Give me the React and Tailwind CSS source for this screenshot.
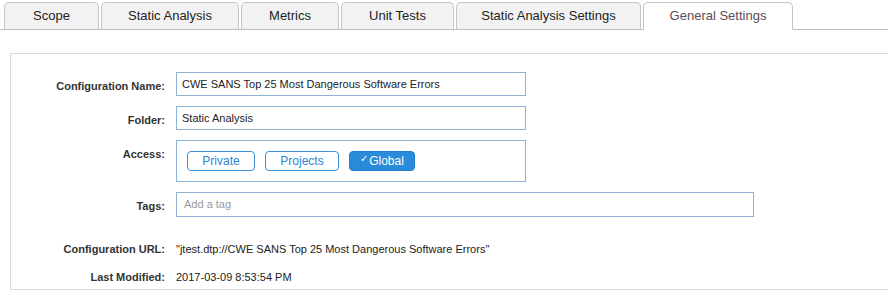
const TABS = ['Scope', 'Static Analysis', 'Metrics', 'Unit Tests', 'Static Analysis Settings', 'General Settings']
const TAB_WIDTHS = ['w-[95px]', 'w-[138px]', 'w-[98px]', 'w-[113px]', 'w-[185px]', 'w-[150px]']

function Row({ label, children, labelPad = 'pt-[6px]' }) {
  return (
    <div className="flex items-start">
      <div className={`w-[154px] shrink-0 text-right font-bold text-[11px] text-[#333] ${labelPad}`}>{label}</div>
      <div className="ml-[11px]">{children}</div>
    </div>
  )
}

function AccessButton({ children, active, w }) {
  return (
    <button
      className={
        `${w} h-[20px] rounded-[4px] border text-[12px] leading-none flex items-center justify-center ` +
        (active
          ? 'border-[#1f7fd0] bg-[#2a8bdb] text-white'
          : 'border-[#3a8fd8] bg-white text-[#2a85d4]')
      }
    >
      {children}
    </button>
  )
}

export default function App() {
  return (
    <div className="w-[888px] h-[294px] bg-white overflow-hidden" style={{ fontFamily: '"Liberation Sans", Arial, sans-serif' }}>
      {/* TABS */}
      <div className="flex items-end pl-[4px] pt-[3px] gap-[2px] border-b border-[#bdbdbd] h-[30px]">
        {TABS.map((t, i) => {
          const active = i === TABS.length - 1
          return (
            <div
              key={t}
              className={
                `${TAB_WIDTHS[i]} h-[27px] rounded-t-[5px] border border-[#c6c6c6] flex items-center justify-center text-[13px] ` +
                (active
                  ? 'bg-white border-b-white -mb-[1px] h-[28px] text-[#5b4d57]'
                  : 'bg-[#f2f2f2] border-b-0 text-[#222]')
              }
            >
              {t}
            </div>
          )
        })}
      </div>

      {/* PANEL */}
      <div className="ml-[10px] mt-[23px] w-[900px] h-[237px] border border-[#d9d9d9] pt-[18px] flex flex-col">
        <div className="flex flex-col gap-[10px]">
          <Row label="Configuration Name:">
            <div className="w-[350px] h-[24px] border border-[#8eb1d6] flex items-center px-[5px] text-[11px] text-[#222]">
              CWE SANS Top 25 Most Dangerous Software Errors
            </div>
          </Row>
          <Row label="Folder:">
            <div className="w-[350px] h-[24px] border border-[#8eb1d6] flex items-center px-[5px] text-[11px] text-[#222]">
              Static Analysis
            </div>
          </Row>
          <Row label="Access:">
            <div className="w-[350px] h-[42px] border border-[#8eb1d6] flex items-center gap-[10px] pl-[10px]">
              <AccessButton w="w-[68px]">Private</AccessButton>
              <AccessButton w="w-[74px]">Projects</AccessButton>
              <AccessButton w="w-[66px]" active>
                <span className="text-[10px] -mt-[5px] mr-[1px]">✓</span>Global
              </AccessButton>
            </div>
          </Row>
          <Row label="Tags:">
            <div className="w-[578px] h-[25px] border border-[#8eb1d6] flex items-center px-[7px] text-[11px] text-[#9a9a9a]">
              Add a tag
            </div>
          </Row>
        </div>
        <div className="mt-[24px] flex flex-col gap-[11px]">
          <Row label="Configuration URL:" labelPad="">
            <div className="text-[11px] text-[#222]">"jtest.dtp://CWE SANS Top 25 Most Dangerous Software Errors"</div>
          </Row>
          <Row label="Last Modified:" labelPad="">
            <div className="text-[11px] text-[#222]">2017-03-09 8:53:54 PM</div>
          </Row>
        </div>
      </div>
    </div>
  )
}
